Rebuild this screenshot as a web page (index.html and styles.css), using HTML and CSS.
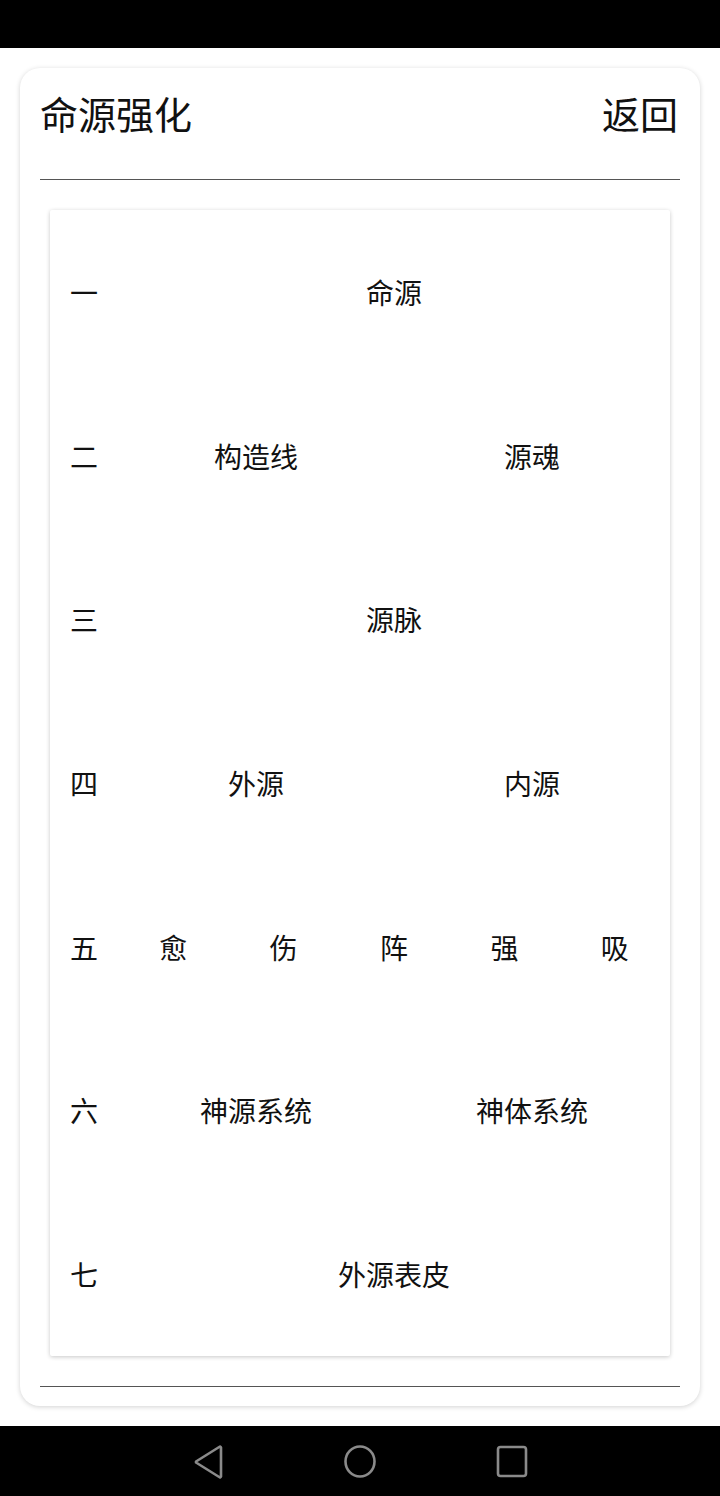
FILE: index.html
```html
<!DOCTYPE html>
<html lang="zh-CN">
<head>
  <meta charset="UTF-8">
  <meta name="viewport" content="width=device-width, initial-scale=1.0">
  <title>命源强化</title>
  <link rel="stylesheet" href="styles.css">
</head>
<body>
  <div class="status-bar"></div>
  <div class="main">
    <div class="panel">
      <div class="header">
        <h2>命源强化</h2>
        <span class="back">返回</span>
      </div>
      <div class="divider"></div>
      <div class="list">
        <div class="row">
          <span class="label">一</span>
          <span class="cell">命源</span>
        </div>
        <div class="row">
          <span class="label">二</span>
          <span class="cell">构造线</span>
          <span class="cell">源魂</span>
        </div>
        <div class="row">
          <span class="label">三</span>
          <span class="cell">源脉</span>
        </div>
        <div class="row">
          <span class="label">四</span>
          <span class="cell">外源</span>
          <span class="cell">内源</span>
        </div>
        <div class="row">
          <span class="label">五</span>
          <span class="cell">愈</span>
          <span class="cell">伤</span>
          <span class="cell">阵</span>
          <span class="cell">强</span>
          <span class="cell">吸</span>
        </div>
        <div class="row">
          <span class="label">六</span>
          <span class="cell">神源系统</span>
          <span class="cell">神体系统</span>
        </div>
        <div class="row">
          <span class="label">七</span>
          <span class="cell">外源表皮</span>
        </div>
      </div>
      <div class="divider bottom"></div>
    </div>
  </div>
  <div class="nav-bar">
    <svg width="40" height="40" viewBox="0 0 40 40">
      <path d="M32 5.5 L33 6.5 L33 35.5 L32 36.5 L8 21.5 L8 20.5 Z" fill="none" stroke="#8a8a8a" stroke-width="2.6" stroke-linejoin="round"/>
    </svg>
    <svg width="40" height="40" viewBox="0 0 40 40">
      <ellipse cx="20" cy="20.5" rx="14.5" ry="15" fill="none" stroke="#8a8a8a" stroke-width="2.6"/>
    </svg>
    <svg width="40" height="40" viewBox="0 0 40 40">
      <rect x="6" y="6" width="28" height="29" rx="2.5" fill="none" stroke="#8a8a8a" stroke-width="2.6"/>
    </svg>
  </div>
</body>
</html>
```

FILE: styles.css
```css
body {
  font-family: "Noto Sans CJK SC", "Noto Sans", sans-serif;
  background-color: #fff;
  margin: 0;
  width: 720px;
  height: 1496px;
  display: flex;
  flex-direction: column;
  color: #111;
}
.status-bar {
  height: 48px;
  background-color: #000;
}
.main {
  flex: 1;
  padding: 20px;
}
.panel {
  height: 1338px;
  box-sizing: border-box;
  background: #fff;
  border-radius: 20px;
  box-shadow: 0 1px 5px rgba(0, 0, 0, 0.18);
  padding: 20px 20px 19px;
  display: flex;
  flex-direction: column;
}
.header {
  height: 50px;
  display: flex;
  justify-content: space-between;
  align-items: center;
  margin-bottom: 41px;
}
.header h2 {
  margin: 0;
  font-size: 38px;
  font-weight: normal;
  line-height: 50px;
}
.back {
  font-size: 38px;
  line-height: 50px;
  margin-right: 2px;
}
.divider {
  height: 1px;
  background-color: #555;
}
.divider.bottom {
  margin-top: 30px;
}
.list {
  margin: 30px 10px 0;
  height: 1146px;
  background: #fff;
  border-radius: 2px;
  box-shadow: 0 1px 4px rgba(0, 0, 0, 0.22);
  display: flex;
  flex-direction: column;
}
.row {
  flex: 1;
  display: flex;
  align-items: center;
  padding-left: 20px;
  font-size: 28px;
  color: #111;
}
.label {
  width: 48px;
}
.cell {
  flex: 1;
  text-align: center;
}
.nav-bar {
  height: 70px;
  background-color: #000;
  display: flex;
  justify-content: center;
  align-items: center;
  gap: 112px;
}
```
